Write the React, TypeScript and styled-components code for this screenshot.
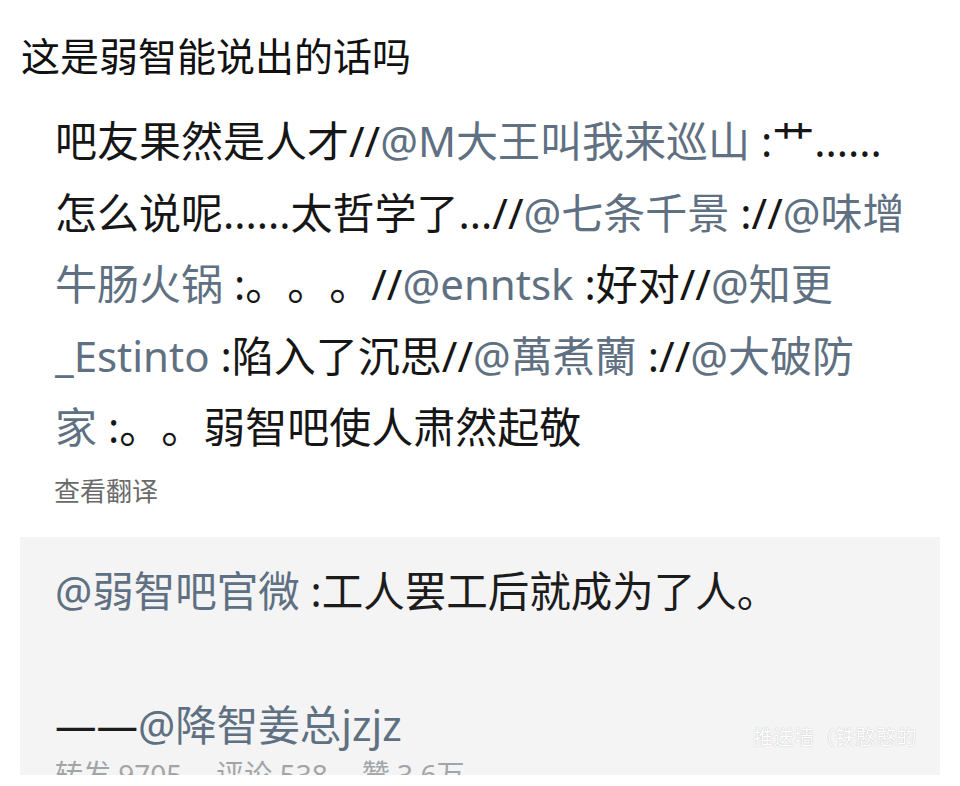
import React from "react";
import styled, { createGlobalStyle } from "styled-components";

const Global = createGlobalStyle`
  html, body { margin: 0; padding: 0; background: #ffffff; }
  body {
    font-family: "Noto Sans", "Noto Sans CJK SC", sans-serif;
    text-spacing-trim: space-all;
  }
`;

const Page = styled.div`
  width: 960px;
  height: 786px;
  overflow: hidden;
  background: #fff;
  display: flex;
  flex-direction: column;
`;

const Title = styled.h1`
  margin: 0;
  padding: 33px 0 0 21px;
  font-size: 39px;
  font-weight: 400;
  line-height: 45px;
  color: #111;
`;

const Body = styled.div`
  padding: 27px 20px 0 55px;
  font-size: 42px;
  line-height: 71.5px;
  color: #161616;
  white-space: nowrap;
`;

const Line = styled.div``;

const Mention = styled.span`
  color: #5e7081;
`;

const Translate = styled.div`
  padding: 11px 0 0 54px;
  font-size: 26px;
  line-height: 34px;
  color: #6a6a6a;
`;

const Quote = styled.div`
  margin: 29px 20px 0 20px;
  height: 238px;
  background: #f4f4f5;
  overflow: hidden;
  position: relative;
  padding: 26px 0 0 35px;
  box-sizing: border-box;
`;

const QuoteLine = styled.div<{ $gap?: number }>`
  font-size: 41.5px;
  line-height: 56px;
  color: #1c1c1c;
  margin-top: ${(p) => p.$gap ?? 0}px;
  white-space: nowrap;
`;

const Stats = styled.div`
  display: flex;
  gap: 34px;
  margin-top: 2px;
  font-size: 28px;
  line-height: 38px;
  color: #a2a5a8;
`;

const Watermark = styled.div`
  position: absolute;
  right: 23px;
  bottom: 24px;
  font-size: 20px;
  color: #ffffff;
  text-shadow: 0 0 1px rgba(110, 110, 110, 0.55);
  letter-spacing: 0.5px;
`;

export default function App() {
  return (
    <>
      <Global />
      <Page>
        <Title>这是弱智能说出的话吗</Title>
        <Body>
          <Line>
            吧友果然是人才//<Mention>@M大王叫我来巡山</Mention> :艹......
          </Line>
          <Line>
            怎么说呢......太哲学了...//<Mention>@七条千景</Mention> ://<Mention>@味增</Mention>
          </Line>
          <Line>
            <Mention>牛肠火锅</Mention> :。。。//<Mention>@enntsk</Mention> :好对//<Mention>@知更</Mention>
          </Line>
          <Line>
            <Mention>_Estinto</Mention> :陷入了沉思//<Mention>@萬煮蘭</Mention> ://<Mention>@大破防</Mention>
          </Line>
          <Line>
            <Mention>家</Mention> :。。弱智吧使人肃然起敬
          </Line>
        </Body>
        <Translate>查看翻译</Translate>
        <Quote>
          <QuoteLine>
            <Mention>@弱智吧官微</Mention> :工人罢工后就成为了人。
          </QuoteLine>
          <QuoteLine $gap={78}>
            ——<Mention>@降智姜总jzjz</Mention>
          </QuoteLine>
          <Stats>
            <span>转发 9705</span>
            <span>评论 538</span>
            <span>赞 3.6万</span>
          </Stats>
          <Watermark>推送墙（铁憨憨的</Watermark>
        </Quote>
      </Page>
    </>
  );
}
